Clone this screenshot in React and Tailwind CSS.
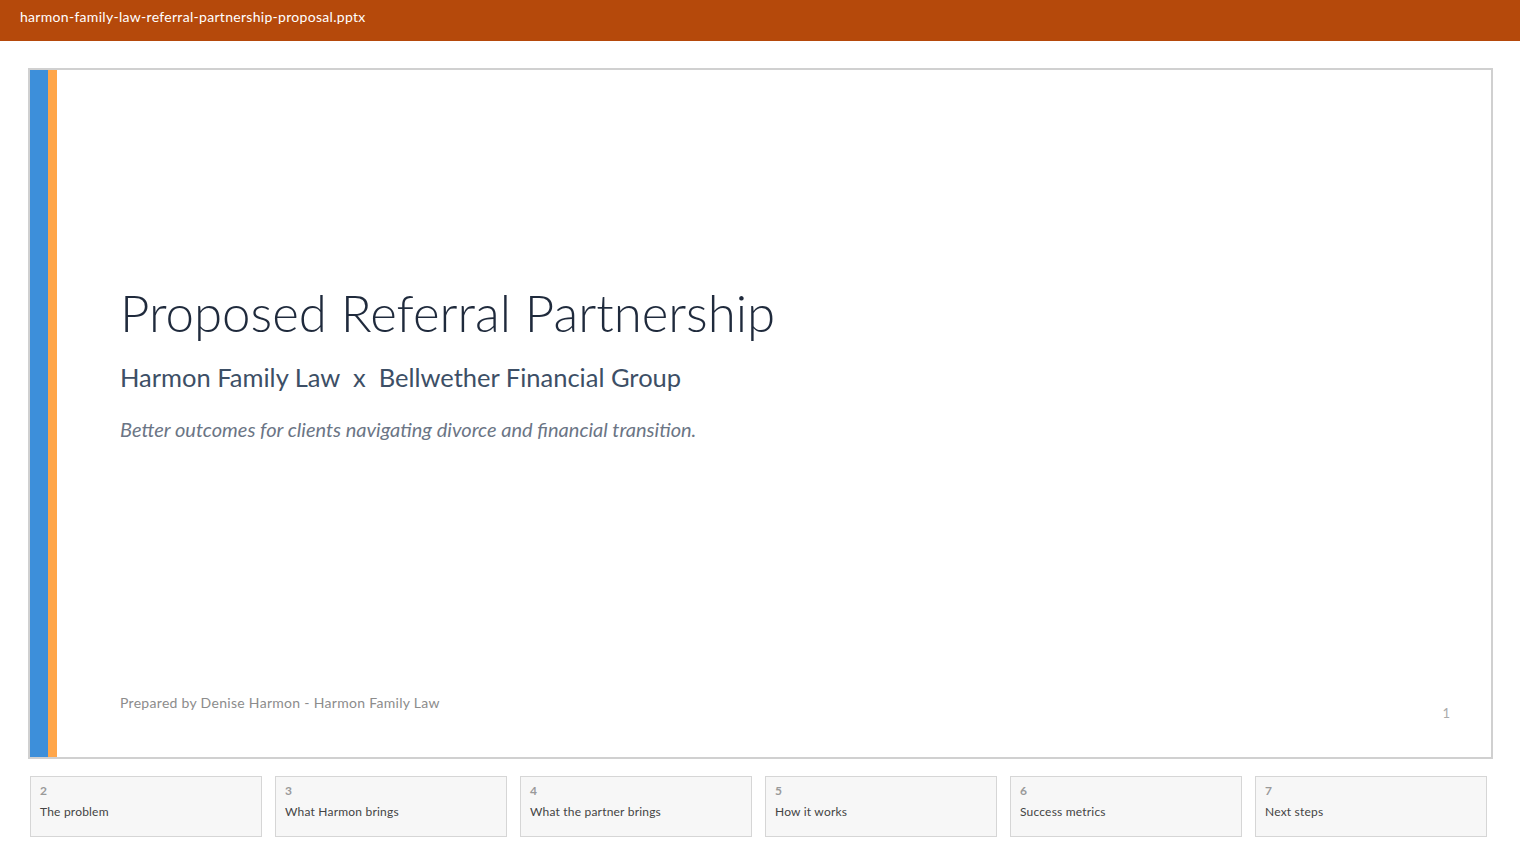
import React from 'react';

const slides = [
  { n: 2, title: 'The problem' },
  { n: 3, title: 'What Harmon brings' },
  { n: 4, title: 'What the partner brings' },
  { n: 5, title: 'How it works' },
  { n: 6, title: 'Success metrics' },
  { n: 7, title: 'Next steps' },
];

const font = { fontFamily: 'Lato, "Noto Sans", sans-serif' };

export default function App() {
  return (
    <div className="min-h-screen w-[1520px] bg-white" style={font}>
      <header className="h-[41px] bg-[#b5490b] px-5 pt-[8px]">
        <div className="text-[14px] leading-[18px] tracking-[0.3px] text-white">
          harmon-family-law-referral-partnership-proposal.pptx
        </div>
      </header>

      <main className="pl-[28px] pt-[27px]">
        {/* title slide */}
        <section className="w-[1465px] h-[691px] border-2 border-[#d0d0d0] flex">
          <div className="w-[18px] bg-[#3d8fda]" />
          <div className="w-[9px] bg-[#ffa64a]" />
          <div className="flex-1 relative flex flex-col pl-[63px]">
            <h1 className="mt-[213px] text-[51px] leading-[60px] font-light text-[#1f2a3c]">
              Proposed Referral Partnership
            </h1>
            <h2 className="mt-[19px] text-[25.5px] leading-[30px] text-[#3d4f66]">
              Harmon Family Law&nbsp; x &nbsp;Bellwether Financial Group
            </h2>
            <p className="mt-[25px] text-[20px] leading-[24px] italic text-[#6b7585]">
              Better outcomes for clients navigating divorce and financial transition.
            </p>
            <p className="mt-auto mb-[44px] text-[14px] tracking-[0.3px] text-[#8c8c8c]">
              Prepared by Denise Harmon - Harmon Family Law
            </p>
            <span className="absolute right-[41px] bottom-[34px] text-[13px] text-[#aaaaaa]">1</span>
          </div>
        </section>

        {/* remaining slides */}
        <nav className="mt-[17px] ml-[2px] w-[1457px] grid grid-cols-6 gap-[13px]">
          {slides.map((s) => (
            <div key={s.n} className="h-[61px] bg-[#f7f7f7] border border-[#d6d6d6] px-[9px] pt-[6px]">
              <div className="text-[12px] leading-[16px] font-bold text-[#9a9a9a]">{s.n}</div>
              <div className="mt-[5px] text-[12px] leading-[16px] tracking-[0.2px] text-[#444444]">{s.title}</div>
            </div>
          ))}
        </nav>
      </main>
    </div>
  );
}
